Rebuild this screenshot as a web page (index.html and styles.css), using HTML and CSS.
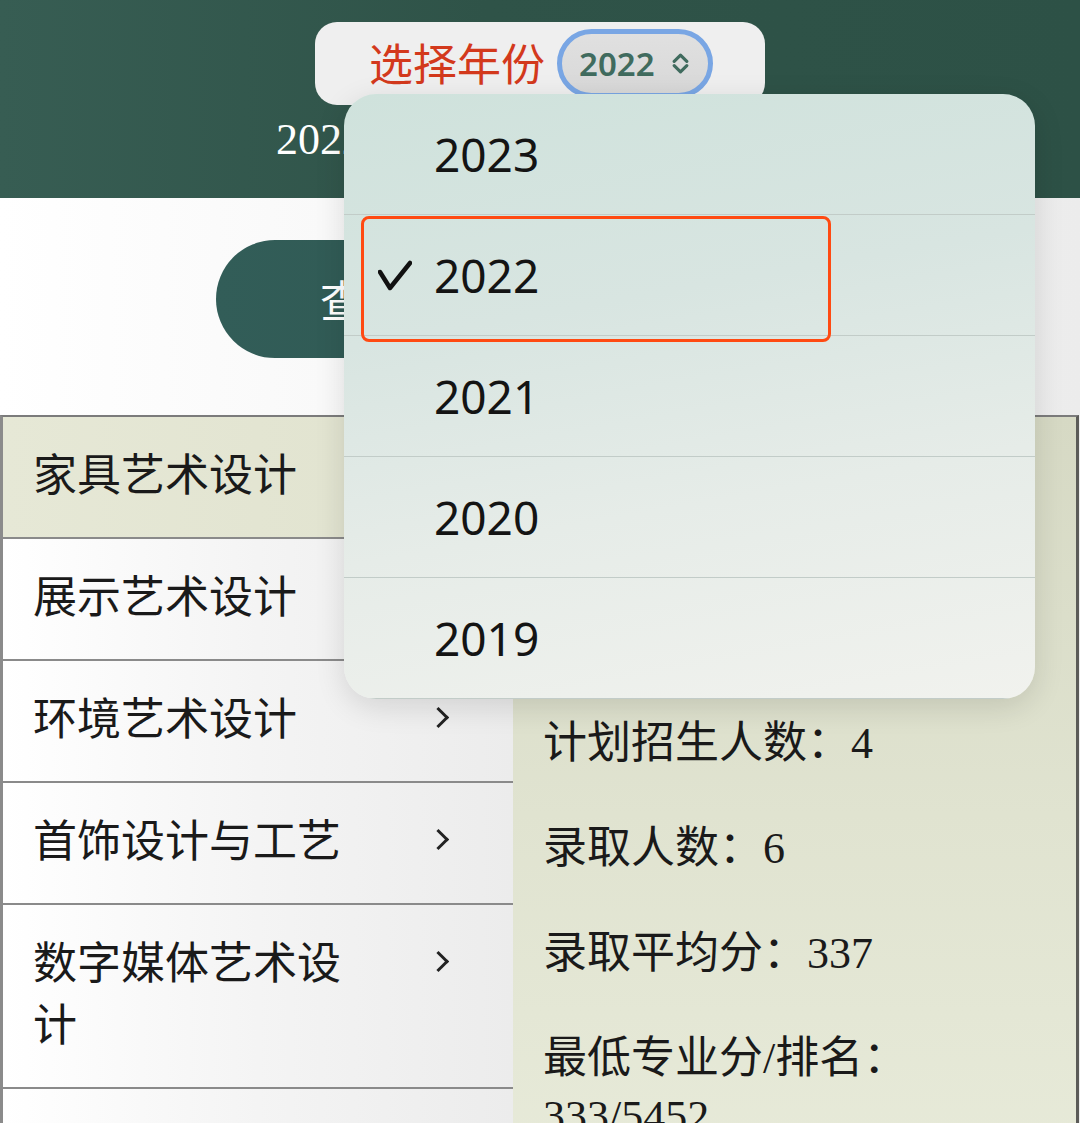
FILE: index.html
```html
<!DOCTYPE html>
<html lang="zh-CN">
<head>
    <meta charset="UTF-8">
    <meta name="viewport" content="width=device-width, initial-scale=1.0">
    <title>历年录取查询</title>
    <link rel="stylesheet" href="styles.css">
</head>
<body>
    <header class="top">
        <div class="year-bar">
            <span class="year-label">选择年份</span>
            <div class="year-select">
                <span>2022</span>
                <svg class="updown" width="21" height="21" viewBox="0 0 20 20">
                    <polyline points="4,8 10,2 16,8"/>
                    <polyline points="4,12 10,18 16,12"/>
                </svg>
            </div>
        </div>
        <p class="subtitle">2022年各专业录取分数一览</p>
    </header>

    <main>
        <div class="btn-wrap">
            <button class="query-btn">查看各专业录取分数线</button>
        </div>

        <div class="major-table">
            <ul class="major-list">
                <li class="major active"><span>家具艺术设计</span><i class="chev"></i></li>
                <li class="major"><span>展示艺术设计</span><i class="chev"></i></li>
                <li class="major"><span>环境艺术设计</span><i class="chev"></i></li>
                <li class="major"><span>首饰设计与工艺</span><i class="chev"></i></li>
                <li class="major"><span>数字媒体艺术设计</span><i class="chev"></i></li>
                <li class="major"><span>产品设计</span><i class="chev"></i></li>
            </ul>
            <div class="detail">
                <p>专业：家具艺术设计</p>
                <p>科类：艺术类</p>
                <p>计划招生人数：4</p>
                <p>录取人数：6</p>
                <p>录取平均分：337</p>
                <p>最低专业分/排名：<br>333/5452</p>
            </div>
        </div>
    </main>

    <!-- native picker, open -->
    <div class="year-menu">
        <div class="opt"><span class="tick"></span>2023</div>
        <div class="opt"><span class="tick">
            <svg width="34" height="31" viewBox="0 0 34 31"><polyline points="2,12 12,28 32,3"/></svg>
        </span>2022</div>
        <div class="opt"><span class="tick"></span>2021</div>
        <div class="opt"><span class="tick"></span>2020</div>
        <div class="opt"><span class="tick"></span>2019</div>
        <div class="mark"></div>
    </div>
</body>
</html>
```

FILE: styles.css
```css
html, body {
    margin: 0;
    overflow: hidden;
}
body {
    position: relative;
    background: linear-gradient(90deg, #ffffff, #f3f3f3 60%, #ececec);
    font-family: "Liberation Serif", "Noto Sans CJK SC", serif;
    color: #1a1a1a;
}

.top {
    height: 198px;
    box-sizing: border-box;
    padding-top: 22px;
    background: linear-gradient(90deg, #375d53, #2f5348 45%, #2d5146);
    text-align: center;
}
.year-bar {
    width: 450px;
    height: 83px;
    margin: 0 auto;
    box-sizing: border-box;
    background: #efefef;
    border-radius: 22px;
    display: flex;
    align-items: center;
    padding-left: 54px;
    gap: 12px;
}
.year-label {
    font-family: "Noto Sans CJK SC", sans-serif;
    font-size: 44px;
    line-height: 1;
    color: #d3391c;
    margin-top: -4px;
}
.year-select {
    height: 69px;
    box-sizing: border-box;
    border: 5px solid #79a6e4;
    border-radius: 35px;
    background: linear-gradient(180deg, #e0e0e0, #d8d8d8);
    display: flex;
    align-items: center;
    gap: 15px;
    padding: 0 17px 0 17px;
    font-family: "Noto Sans", sans-serif;
    font-weight: 600;
    font-size: 33px;
    color: #406b5e;
}
.updown polyline {
    fill: none;
    stroke: #406b5e;
    stroke-width: 3;
    stroke-linecap: round;
    stroke-linejoin: round;
}
.subtitle {
    margin: 10px 0 0;
    font-size: 44px;
    line-height: 50px;
    color: #fff;
}

.btn-wrap {
    padding: 42px 0 57px;
    text-align: center;
}
.query-btn {
    width: 648px;
    height: 118px;
    border: none;
    border-radius: 59px;
    background: linear-gradient(90deg, #325d58, #2d544c);
    color: #fff;
    font-family: "Noto Sans CJK SC", sans-serif;
    font-size: 44px;
}

.major-table {
    display: grid;
    grid-template-columns: 510px 1fr;
    border-top: 2px solid #7b7b7b;
    border-left: 3px solid #8b8b8b;
    border-right: 3px solid #5b5b58;
    margin-right: 1px;
}
.major-list {
    list-style: none;
    margin: 0;
    padding: 0;
}
.major {
    display: grid;
    grid-template-columns: 1fr auto;
    column-gap: 60px;
    padding: 29px 61px 29px 30px;
    font-size: 44px;
    line-height: 62px;
    border-bottom: 2px solid #8a8a8a;
    background: linear-gradient(90deg, #ffffff, #f4f4f4 50%, #ececec);
}
.major.active {
    background: linear-gradient(90deg, #e6e8d6, #e0e2ce);
}
.chev {
    width: 12px;
    height: 12px;
    margin: 20px 6px 0 0;
    border-top: 3px solid #222;
    border-right: 3px solid #222;
    transform: rotate(45deg);
}

.detail {
    padding: 88px 20px 0 30px;
    background: linear-gradient(180deg, #d6d9c4, #e0e3d0 50%, #e8ebda);
    font-size: 44px;
    line-height: 58px;
}
.detail p {
    margin: 0 0 47px;
}

.year-menu {
    position: absolute;
    left: 344px;
    top: 94px;
    width: 691px;
    border-radius: 32px;
    overflow: hidden;
    background: linear-gradient(170deg, #cfe2dc 0%, #d8e5e1 35%, #e6ece8 65%, #f1f2ee 100%);
    box-shadow: 0 8px 30px rgba(0, 0, 0, 0.12);
    font-family: "Noto Sans", sans-serif;
    font-size: 46px;
    color: #141414;
}
.opt {
    height: 120px;
    display: flex;
    align-items: center;
    padding-left: 34px;
    border-bottom: 1px solid #c2ccc8;
}
.opt:last-of-type {
    border-bottom: none;
}
.tick {
    width: 56px;
    height: 31px;
    display: flex;
}
.tick polyline {
    fill: none;
    stroke: #111;
    stroke-width: 4.5;
    stroke-linecap: round;
    stroke-linejoin: round;
}
.mark {
    position: absolute;
    left: 17px;
    top: 122px;
    width: 470px;
    height: 126px;
    box-sizing: border-box;
    border: 3px solid #ff4a12;
    border-radius: 8px;
}
```
